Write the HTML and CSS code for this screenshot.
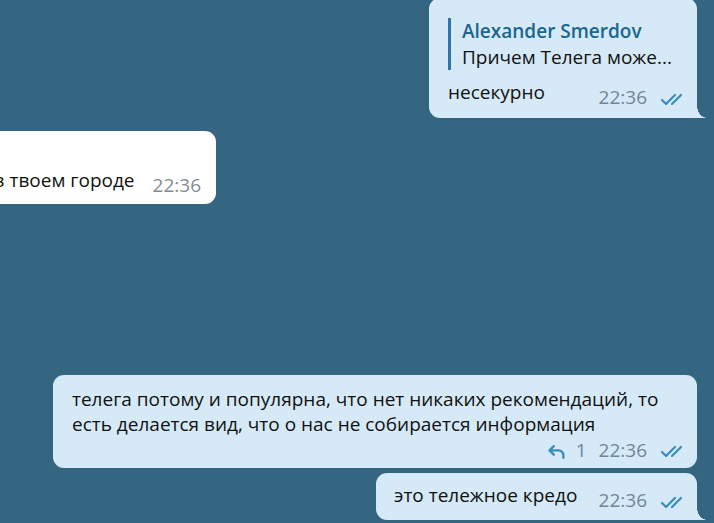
FILE: index.html
```html
<!DOCTYPE html>
<html lang="ru">
<head>
    <meta charset="UTF-8">
    <title>Чат</title>
    <link rel="stylesheet" href="styles.css">
</head>
<body>
    <div class="chat">
        <div class="msg out tail first">
            <div class="reply">
                <div class="reply-name">Alexander Smerdov</div>
                <div class="reply-text">Причем Телега може...</div>
            </div>
            <div class="row">
                <span class="text">несекурно</span>
                <span class="meta">
                    <span class="time">22:36</span>
                    <svg class="checks" width="26" height="13" viewBox="0 0 26 13"><path d="M2 7 L6 11 L15 2 M12 11 L21 2" /></svg>
                </span>
            </div>
        </div>

        <div class="msg in">
            <div class="row">
                <span class="text">в твоем городе</span>
                <span class="meta"><span class="time">22:36</span></span>
            </div>
        </div>

        <div class="msg out long">
            <div class="text">телега потому и популярна, что нет никаких рекомендаций, то<br>есть делается вид, что о нас не собирается информация</div>
            <div class="meta-line">
                <svg class="reply-icon" width="20" height="16" viewBox="0 0 18 15"><path d="M6 2 L2 6 L6 10 M2 6 H10.5 A4.5 4.5 0 0 1 15 10.5 V13" /></svg>
                <span class="count">1</span>
                <span class="time">22:36</span>
                <svg class="checks" width="26" height="13" viewBox="0 0 26 13"><path d="M2 7 L6 11 L15 2 M12 11 L21 2" /></svg>
            </div>
        </div>

        <div class="msg out tail last">
            <div class="row">
                <span class="text">это тележное кредо</span>
                <span class="meta">
                    <span class="time">22:36</span>
                    <svg class="checks" width="26" height="13" viewBox="0 0 26 13"><path d="M2 7 L6 11 L15 2 M12 11 L21 2" /></svg>
                </span>
            </div>
        </div>
    </div>
</body>
</html>
```

FILE: styles.css
```css
body {
    margin: 0;
    background-color: #346581;
    font-family: 'Open Sans', 'Noto Sans', sans-serif;
    font-size: 19px;
    color: #111;
    overflow: hidden;
}
.chat {
    display: flex;
    flex-direction: column;
    height: 523px;
}
.msg {
    position: relative;
    border-radius: 11px;
    line-height: 25px;
}
.out {
    align-self: flex-end;
    margin-right: 17px;
    background-color: #d5e9f6;
}
.in {
    align-self: flex-start;
    background-color: #fff;
    margin-left: -40px;
    margin-top: 13px;
    width: 256px;
    padding: 37px 15px 6px 0;
    box-sizing: border-box;
    display: flex;
    justify-content: flex-end;
}
.tail {
    border-bottom-right-radius: 0;
}
.tail::after {
    content: "";
    position: absolute;
    right: -10px;
    bottom: 0;
    width: 10px;
    height: 12px;
    background: radial-gradient(ellipse 10px 12px at 100% 0, transparent 96%, #d5e9f6 100%);
}
.first {
    margin-top: -2px;
    width: 268px;
    box-sizing: border-box;
    padding: 20px 11px 8px 19px;
}
.reply {
    border-left: 3px solid #2c77a8;
    padding-left: 11px;
    line-height: 26px;
    margin-bottom: 10px;
}
.reply-name {
    color: #1a6690;
    font-weight: 600;
}
.row {
    display: flex;
    align-items: flex-start;
    justify-content: space-between;
    gap: 18px;
}
.meta {
    display: flex;
    align-items: center;
    gap: 13px;
    margin-top: 5px;
}
.time {
    color: #6f8797;
}
.in .time {
    color: #838c93;
}
.checks,
.reply-icon {
    margin-top: 3px;
}
.checks path,
.reply-icon path {
    fill: none;
    stroke: #3a8cbf;
    stroke-width: 2.2;
    stroke-linecap: round;
    stroke-linejoin: round;
}
.long {
    margin-top: 171px;
    width: 644px;
    box-sizing: border-box;
    padding: 12px 11px 6px 19px;
}
.meta-line {
    display: flex;
    align-items: center;
    justify-content: flex-end;
    line-height: 24px;
    margin-top: 1px;
}
.reply-icon {
    margin-right: 9px;
}
.count {
    color: #6f8797;
    margin-right: 12px;
}
.meta-line .time {
    margin-right: 13px;
}
.last {
    margin-top: 5px;
    width: 321px;
    box-sizing: border-box;
    padding: 10px 11px 7px 18px;
}
```
